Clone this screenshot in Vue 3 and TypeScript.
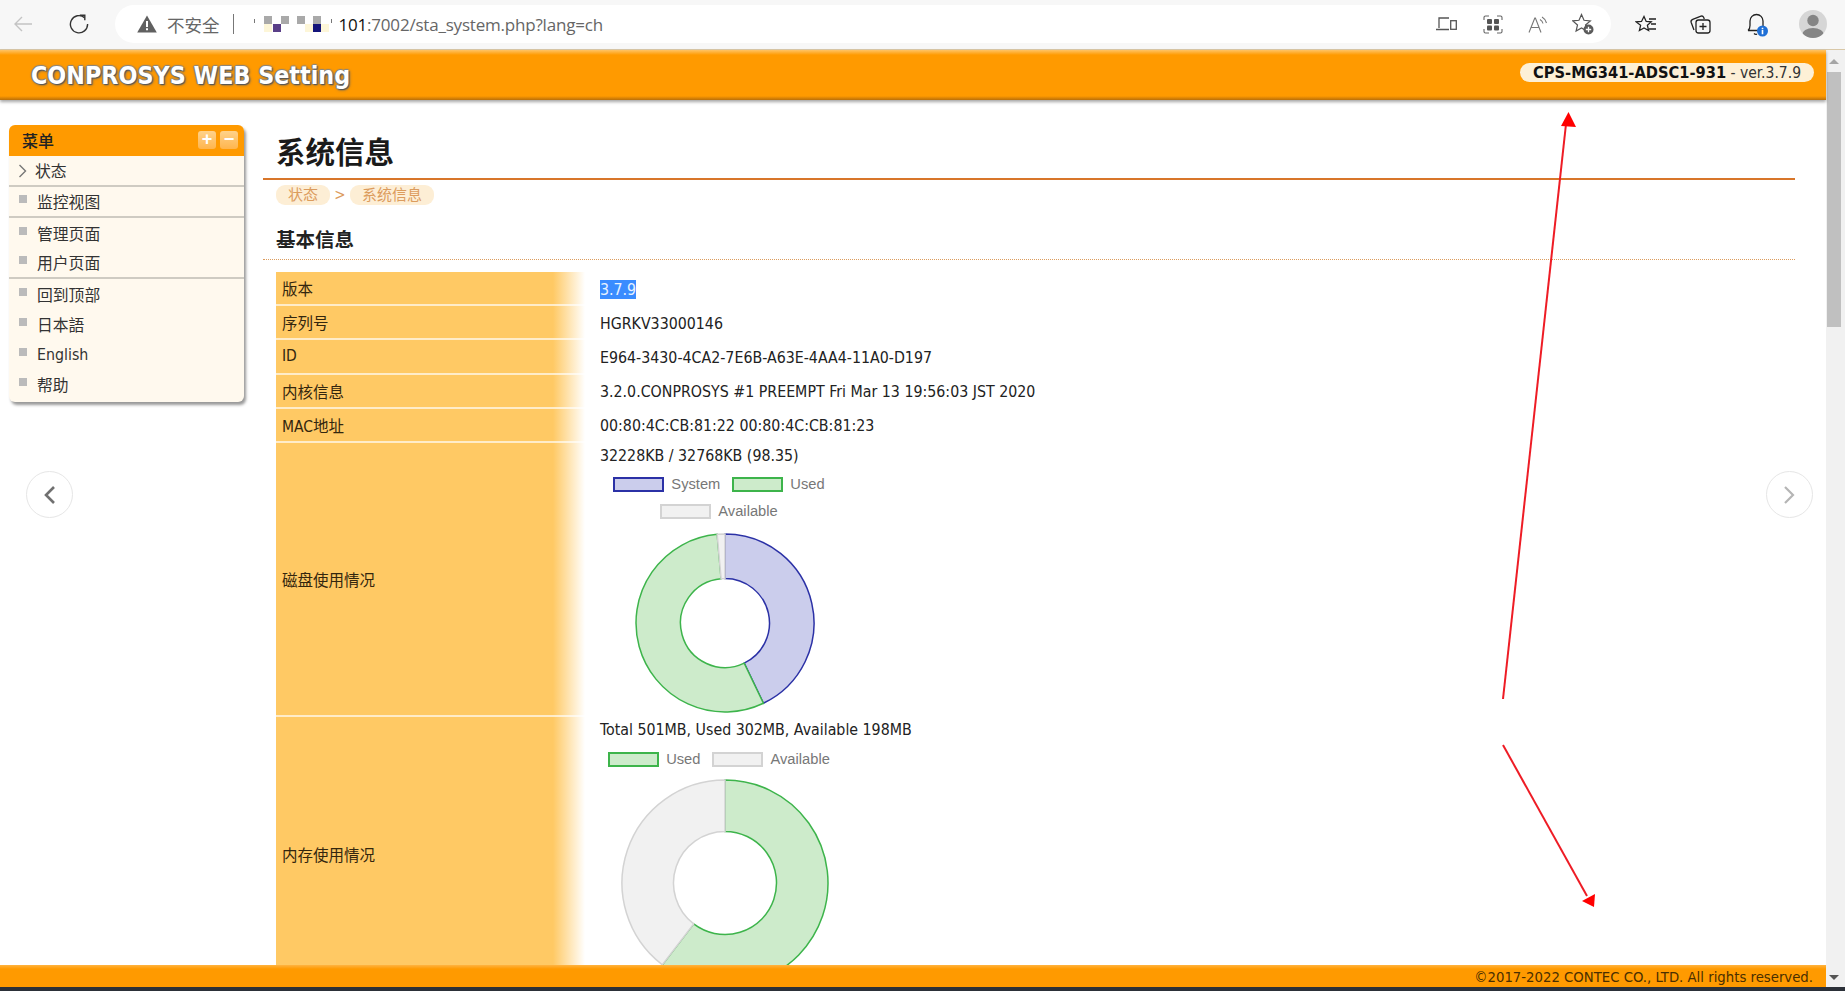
<script setup lang="ts">
interface Slice {
  value: number;
  fill: string;
  stroke: string;
}

interface Donut {
  size: number;
  outer: number;
  inner: number;
  slices: Slice[];
}

const systemColor = { fill: "#cbcdec", stroke: "#2b31a6" };
const usedColor = { fill: "#cdebcb", stroke: "#3db44b" };
const freeColor = { fill: "#f1f1f1", stroke: "#d3d3d3" };

const menuItems = [
  { label: "状态", kind: "chevron", line: true },
  { label: "监控视图", kind: "dot", line: true },
  { label: "管理页面", kind: "dot", line: false },
  { label: "用户页面", kind: "dot", line: true },
  { label: "回到顶部", kind: "dot", line: false },
  { label: "日本語", kind: "dot", line: false },
  { label: "English", kind: "dot", line: false },
  { label: "帮助", kind: "dot", line: false },
];

const infoRows = [
  { label: "序列号", value: "HGRKV33000146" },
  { label: "ID", value: "E964-3430-4CA2-7E6B-A63E-4AA4-11A0-D197" },
  { label: "内核信息", value: "3.2.0.CONPROSYS #1 PREEMPT Fri Mar 13 19:56:03 JST 2020" },
  { label: "MAC地址", value: "00:80:4C:CB:81:22 00:80:4C:CB:81:23" },
];

const diskChart: Donut = {
  size: 182,
  outer: 89,
  inner: 44.5,
  slices: [
    { value: 42.9, ...systemColor },
    { value: 55.7, ...usedColor },
    { value: 1.4, ...freeColor },
  ],
};

const memoryChart: Donut = {
  size: 210,
  outer: 103,
  inner: 51.5,
  slices: [
    { value: 302, ...usedColor },
    { value: 198, ...freeColor },
  ],
};

const point = (c: number, r: number, deg: number) => {
  const a = ((deg - 90) * Math.PI) / 180;
  return `${(c + r * Math.cos(a)).toFixed(2)} ${(c + r * Math.sin(a)).toFixed(2)}`;
};

const slicePaths = (chart: Donut) => {
  const total = chart.slices.reduce((sum, s) => sum + s.value, 0);
  const c = chart.size / 2;
  let start = 0;
  return chart.slices.map((s) => {
    const end = start + (s.value / total) * 360;
    const large = end - start > 180 ? 1 : 0;
    const d =
      `M ${point(c, chart.outer, start)} A ${chart.outer} ${chart.outer} 0 ${large} 1 ${point(c, chart.outer, end)} ` +
      `L ${point(c, chart.inner, end)} A ${chart.inner} ${chart.inner} 0 ${large} 0 ${point(c, chart.inner, start)} Z`;
    start = end;
    return { d, fill: s.fill, stroke: s.stroke };
  });
};

const diskPaths = slicePaths(diskChart);
const memoryPaths = slicePaths(memoryChart);
</script>

<template>
  <div class="browser">
    <div class="chrome">
      <svg class="ic-back" width="20" height="18" viewBox="0 0 20 18" fill="none" stroke="#c4c4c4" stroke-width="1.4">
        <path d="M19 9H2M9 2 2 9l7 7" />
      </svg>
      <svg class="ic-reload" width="20" height="20" viewBox="0 0 20 20" fill="none" stroke="#333" stroke-width="1.4">
        <path d="M15.5 3.6A8.6 8.6 0 1 0 18.6 10" />
        <path d="M10.8 1.2h5v5" />
      </svg>
      <div class="address">
        <svg class="ic-warn" width="20" height="18" viewBox="0 0 20 18">
          <path d="M10 .5 19.8 17.5H.2Z" fill="#606060" />
          <path d="M9 6h2v6H9zM9 13.2h2v2H9z" fill="#fff" />
        </svg>
        <span class="insecure">不安全</span>
        <span class="divider"></span>
        <span class="redacted">
          <i class="tick" style="left: 20px"></i>
          <i class="px gray" style="left: 30px; top: 0"></i>
          <i class="px cream" style="left: 30px; top: 8px"></i>
          <i class="px purple" style="left: 39px; top: 8px"></i>
          <i class="px gray" style="left: 47px; top: 0"></i>
          <i class="px gray" style="left: 63px; top: 0"></i>
          <i class="px cream" style="left: 71px; top: 8px"></i>
          <i class="px gray" style="left: 79px; top: 0"></i>
          <i class="px navy" style="left: 79px; top: 8px"></i>
          <i class="px cream" style="left: 87px; top: 8px"></i>
          <i class="tick" style="left: 97px"></i>
        </span>
        <span class="url"><b>101</b>:7002/sta_system.php?lang=ch</span>
        <span class="spacer"></span>
        <svg class="ic-device" width="21" height="14" viewBox="0 0 21 14" fill="none" stroke="#555" stroke-width="1.3">
          <path d="M13 1H3v10M0 12.5h13" />
          <rect x="14.7" y="3.7" width="5.6" height="8.6" />
        </svg>
        <svg class="ic-apps" width="20" height="19" viewBox="0 0 20 19">
          <g fill="#555">
            <rect x="4" y="4" width="5" height="5" rx="1" />
            <rect x="11" y="4" width="5" height="5" rx="1" />
            <rect x="4" y="10.5" width="5" height="5" rx="1" />
            <rect x="11" y="10.5" width="5" height="5" rx="1" />
          </g>
          <path d="M1 5V2.5A1.5 1.5 0 0 1 2.500 1H6M14 1h3.500A1.500 1.500 0 0 1 19 2.500V5M1 14v2.500A1.500 1.500 0 0 0 2.500 18H6M14 18h3.500a1.500 1.500 0 0 0 1.500-1.500V14" fill="none" stroke="#666" stroke-width="1.1" />
        </svg>
        <svg class="ic-read" width="20" height="17" viewBox="0 0 20 17" fill="none" stroke="#777" stroke-width="1.1">
          <path d="M1 16.500 6.800 2h.6L13 16.500M3 11.500h8" />
          <path d="M12 3.500q2.500 1.500 3 4M14 1q3.500 2 4.500 6" />
        </svg>
        <svg class="ic-fav-add" width="22" height="22" viewBox="0 0 22 22">
          <path d="M9.500 1.500 12 7.300l6.300.6-4.800 4.100 1.400 6.100-5.400-3.200-5.400 3.200L5.500 12 .8 7.900l6.200-.6Z" fill="none" stroke="#555" stroke-width="1.2" />
          <circle cx="16.500" cy="16.500" r="5" fill="#5a5a5a" />
          <path d="M16.500 13.800v5.400M13.800 16.500h5.400" stroke="#fff" stroke-width="1.300" />
        </svg>
      </div>
      <svg class="ic-favs" width="22" height="19" viewBox="0 0 22 19" fill="none" stroke="#222" stroke-width="1.3">
        <path d="M9 1.500 11.200 6.500l5 .4-3.800 3.400 1.200 5.200L9 12.900l-4.600 2.600 1.200-5.200L1.200 6.900l5.300-.4Z" />
        <path d="M14 4h7M16 9h5M14 14h7" />
      </svg>
      <svg class="ic-collect" width="23" height="20" viewBox="0 0 23 20" fill="none" stroke="#222" stroke-width="1.3">
        <path d="M5 16 2.200 8.500q-.8-2.300 1.500-3.200L12 2.200q1.800-.6 2.600 1L15.300 5" />
        <rect x="7" y="6" width="14" height="13" rx="2.500" />
        <path d="M14 9v7M10.500 12.500h7" />
      </svg>
      <svg class="ic-bell" width="23" height="25" viewBox="0 0 23 25">
        <path d="M3 18.500q2-1.500 2-5V9a6.500 6.500 0 0 1 13 0v4.500q0 2 1 3M3 18.500h12M9 21.500q1.500 1.500 3 .5" fill="none" stroke="#222" stroke-width="1.3" />
        <circle cx="17.500" cy="19" r="5.500" fill="#1f6fd6" />
        <path d="M16.700 18h1.600v4.200h-1.600zM16.700 15.800h1.600v1.400h-1.600z" fill="#fff" />
      </svg>
      <svg class="ic-avatar" width="28" height="28" viewBox="0 0 28 28">
        <defs>
          <clipPath id="avatar-clip"><circle cx="14" cy="14" r="14" /></clipPath>
        </defs>
        <circle cx="14" cy="14" r="14" fill="#d6d6d6" />
        <g clip-path="url(#avatar-clip)" fill="#858585">
          <circle cx="14" cy="10.500" r="5.700" />
          <ellipse cx="14" cy="25" rx="11" ry="7" />
        </g>
      </svg>
    </div>

    <div class="viewport">
      <div class="page">
        <header class="top-bar">
          <div class="brand">CONPROSYS WEB Setting</div>
          <div class="device-pill"><b>CPS-MG341-ADSC1-931</b> - ver.3.7.9</div>
        </header>

        <div class="body">
          <aside class="menu">
            <div class="menu-head">
              <span>菜单</span>
              <span class="menu-tools">
                <i class="tool">+</i>
                <i class="tool">−</i>
              </span>
            </div>
            <div v-for="item in menuItems" :key="item.label" class="menu-item" :class="{ line: item.line }">
              <svg v-if="item.kind === 'chevron'" class="chev" width="9" height="14" viewBox="0 0 9 14" fill="none" stroke="#777" stroke-width="1.4">
                <path d="M1.500 1 7.500 7l-6 6" />
              </svg>
              <i v-else class="dot"></i>
              <span>{{ item.label }}</span>
            </div>
          </aside>

          <main class="content">
            <h1>系统信息</h1>
            <div class="crumbs">
              <span class="crumb">状态</span>
              <span class="crumb-sep">&gt;</span>
              <span class="crumb long">系统信息</span>
            </div>
            <h2>基本信息</h2>

            <div class="info">
              <div class="row">
                <div class="label">版本</div>
                <div class="value"><span class="selected">3.7.9</span></div>
              </div>
              <div v-for="row in infoRows" :key="row.label" class="row">
                <div class="label">{{ row.label }}</div>
                <div class="value">{{ row.value }}</div>
              </div>
              <div class="row chart-row disk">
                <div class="label">磁盘使用情况</div>
                <div class="value">
                  <div class="usage">32228KB / 32768KB (98.35)</div>
                  <div class="chart">
                    <div class="legend disk-legend">
                      <span class="key"><i class="swatch system"></i>System</span>
                      <span class="key"><i class="swatch used"></i>Used</span>
                      <span class="key"><i class="swatch free"></i>Available</span>
                    </div>
                    <svg class="donut disk-donut" :width="diskChart.size" :height="diskChart.size">
                      <path v-for="p in diskPaths" :key="p.d" :d="p.d" :fill="p.fill" :stroke="p.stroke" stroke-width="1.500" />
                    </svg>
                  </div>
                </div>
              </div>
              <div class="row chart-row memory">
                <div class="label">内存使用情况</div>
                <div class="value">
                  <div class="usage">Total 501MB, Used 302MB, Available 198MB</div>
                  <div class="chart">
                    <div class="legend mem-legend">
                      <span class="key"><i class="swatch used"></i>Used</span>
                      <span class="key"><i class="swatch free"></i>Available</span>
                    </div>
                    <svg class="donut mem-donut" :width="memoryChart.size" :height="memoryChart.size">
                      <path v-for="p in memoryPaths" :key="p.d" :d="p.d" :fill="p.fill" :stroke="p.stroke" stroke-width="1.500" />
                    </svg>
                  </div>
                </div>
              </div>
            </div>
          </main>
        </div>

        <footer class="bottom-bar">©2017-2022 CONTEC CO., LTD. All rights reserved.</footer>
      </div>

      <div class="scrollbar">
        <i class="arrow-up"></i>
        <i class="thumb"></i>
        <span class="spacer"></span>
        <i class="arrow-down"></i>
      </div>
    </div>

    <div class="taskbar"></div>

    <button class="nav nav-prev" aria-label="previous">
      <svg width="13" height="20" viewBox="0 0 13 20" fill="none" stroke="#707070" stroke-width="2.600"><path d="M11 2 3 10l8 8" /></svg>
    </button>
    <button class="nav nav-next" aria-label="next">
      <svg width="13" height="20" viewBox="0 0 13 20" fill="none" stroke="#b5b5b5" stroke-width="2.200"><path d="M2 2l8 8-8 8" /></svg>
    </button>

    <!-- red annotation arrows drawn over the screenshot -->
    <svg class="marks" width="1845" height="991" viewBox="0 0 1845 991">
      <path d="M1503 699 1566 124" stroke="#ee1c25" stroke-width="2" />
      <path d="M1568.500 112 1561 126 1576 127Z" fill="#ff0000" />
      <path d="M1503 745 1587 896" stroke="#ee1c25" stroke-width="2" />
      <path d="M1594 907 1595 894 1582 901Z" fill="#ff0000" />
    </svg>
  </div>
</template>

<style scoped>
.browser {
  position: relative;
  display: flex;
  flex-direction: column;
  height: 991px;
  overflow: hidden;
  background: #fff;
  font-family: "DejaVu Sans Condensed", "Noto Sans CJK SC", sans-serif;
  color: #222;
}

.chrome {
  flex: none;
  display: flex;
  align-items: center;
  height: 50px;
  padding-bottom: 1px;
  background: #f7f7f7;
  border-bottom: 1px solid #d9c8a8;
  box-sizing: border-box;
}
.ic-back { margin-left: 13px; }
.ic-reload { margin-left: 36px; }

.address {
  display: flex;
  align-items: center;
  box-sizing: border-box;
  width: 1496px;
  height: 38px;
  margin-left: 26px;
  padding-left: 22px;
  background: #fff;
  border-radius: 19px;
  font-family: "Open Sans", "Noto Sans CJK SC", sans-serif;
}
.insecure {
  margin-left: 10px;
  font-size: 17.500px;
  color: #666;
  font-family: "Noto Sans CJK SC", sans-serif;
}
.divider {
  width: 1px;
  height: 20px;
  margin-left: 13px;
  background: #777;
}
.redacted {
  position: relative;
  width: 105px;
  height: 17px;
  flex: none;
}
.px {
  position: absolute;
  width: 8px;
  height: 8px;
}
.tick {
  position: absolute;
  top: 3px;
  width: 1px;
  height: 4px;
  background: #777;
}
.gray { background: #a9a9a9; }
.cream { background: #fdf6d8; }
.purple { background: #5a3f88; }
.navy { background: #14147a; }
.url {
  font-size: 17px;
  letter-spacing: -0.200px;
  color: #666;
}
.url b {
  font-weight: 400;
  color: #111;
}
.spacer { flex: 1; }
.ic-device { margin-right: 26px; }
.ic-apps { margin-right: 25px; }
.ic-read { margin-right: 24px; }
.ic-fav-add { margin-right: 17px; }
.ic-favs { margin-left: 24px; }
.ic-collect { margin-left: 32px; }
.ic-bell { margin-left: 33px; }
.ic-avatar { margin-left: 31px; }

.viewport {
  flex: 1;
  display: flex;
  min-height: 0;
}
.page {
  flex: 1;
  display: flex;
  flex-direction: column;
  min-width: 0;
}

.top-bar {
  flex: none;
  position: relative;
  z-index: 2;
  display: flex;
  align-items: center;
  justify-content: space-between;
  box-sizing: border-box;
  height: 50px;
  padding: 0 12px 0 31px;
  background: linear-gradient(#ffc466 0, #ff9a00 5px, #ff9a00 46px, #b96f0a 50px);
  box-shadow: 0 2px 3px rgba(0, 0, 0, 0.35);
}
.brand {
  font-size: 24.800px;
  font-weight: 700;
  color: #fff;
  text-shadow: 1px 1px 1px #555, -1px 0 1px #777, 0 -1px 1px #888, 1px 1px 3px #666;
}
.device-pill {
  margin-top: -5px;
  padding: 0 13px;
  height: 19px;
  line-height: 19px;
  border-radius: 10px;
  background: #fdf0d6;
  font-size: 15.500px;
  color: #333;
}
.device-pill b {
  font-size: 16.300px;
  color: #111;
}

.body {
  flex: 1;
  display: flex;
  align-items: flex-start;
  min-height: 0;
  overflow: hidden;
  padding-left: 9px;
}

.menu {
  flex: none;
  width: 235px;
  margin-top: 25px;
  border-radius: 6px;
  background: #fff9ee;
  box-shadow: 2px 3px 3px #999;
  padding-bottom: 3px;
}
.menu-head {
  display: flex;
  align-items: center;
  justify-content: space-between;
  box-sizing: border-box;
  height: 31px;
  padding: 0 6px 2px 13px;
  background: #ff9a00;
  border-radius: 6px 6px 0 0;
  font-size: 16px;
  font-weight: 500;
  color: #222;
}
.menu-tools {
  display: flex;
  gap: 4px;
}
.tool {
  width: 18px;
  height: 18px;
  line-height: 17px;
  border-radius: 3px;
  text-align: center;
  font: 700 18px/17px "Liberation Sans", sans-serif;
  color: #fff;
  background: linear-gradient(#ffd28a, #ffb54d);
}
.menu-item {
  display: flex;
  align-items: center;
  box-sizing: border-box;
  height: 30px;
  font-size: 15.800px;
  color: #333;
}
.menu-item.line {
  height: 31px;
  border-bottom: 2px solid #cfcbc2;
}
.chev {
  margin-left: 9px;
  margin-right: 8px;
}
.dot {
  flex: none;
  width: 8px;
  height: 8px;
  margin-left: 10px;
  margin-right: 10px;
  margin-top: -5px;
  background: #bbb;
}

.content {
  flex: 1;
  min-width: 0;
  margin: 0 31px 0 19px;
}
h1 {
  margin: 0;
  height: 80px;
  box-sizing: border-box;
  padding: 33px 0 0 13px;
  font-size: 29.500px;
  line-height: 40px;
  font-weight: 700;
  color: #1a1a1a;
  border-bottom: 2px solid #d8762a;
}
.crumbs {
  display: flex;
  align-items: center;
  height: 20px;
  margin-top: 5px;
  padding-left: 13px;
  font-size: 15px;
  color: #dc9c5d;
}
.crumb {
  padding: 0 12px;
  height: 20px;
  line-height: 20px;
  border-radius: 9px;
  background: #fdeed5;
}
.crumb-sep {
  width: 20px;
  text-align: center;
}
h2 {
  margin: 25px 0 0;
  padding: 0 0 7px 13px;
  font-size: 19.500px;
  line-height: 22px;
  font-weight: 700;
  color: #222;
  border-bottom: 1px dotted #dc9c5d;
}

.info {
  margin: 12px 0 0 13px;
}
.row {
  display: flex;
  box-sizing: border-box;
  min-height: 34.200px;
  position: relative;
}
.label {
  flex: none;
  display: flex;
  align-items: center;
  box-sizing: border-box;
  width: 309px;
  padding-left: 6px;
  font-size: 15.500px;
  color: #33260e;
  background: linear-gradient(to right, #ffc964 277px, #fff 309px);
  border-bottom: 2px solid rgba(255, 255, 255, 0.65);
}
.value {
  flex: 1;
  display: flex;
  align-items: center;
  min-width: 0;
  padding-left: 15px;
  font-size: 15.800px;
  color: #222;
}
.selected {
  background: #3a8cff;
  color: #e8f2ff;
}

.chart-row .value {
  display: block;
}
.chart-row.disk { height: 274px; }
.chart-row.memory { height: 276px; }
.usage {
  height: 26px;
  line-height: 26px;
}
.chart {
  display: flex;
  flex-direction: column;
  align-items: center;
  width: 250px;
}
.legend {
  display: flex;
  flex-wrap: wrap;
  justify-content: center;
  column-gap: 12px;
  row-gap: 12px;
  margin-right: 12px;
  font: 14.700px/15px "Liberation Sans", sans-serif;
  color: #777;
}
.disk-legend { margin-top: 8px; }
.mem-legend { margin-top: 9px; }
.key {
  display: flex;
  align-items: center;
  gap: 7px;
}
.swatch {
  width: 51px;
  height: 15px;
  box-sizing: border-box;
  border: 2px solid;
}
.system { background: #cbcdec; border-color: #2b31a6; }
.used { background: #cdebcb; border-color: #3db44b; }
.free { background: #f1f1f1; border-color: #d3d3d3; }
.donut { flex: none; }
.disk-donut { margin-top: 13px; }
.mem-donut { margin-top: 11px; }

.bottom-bar {
  flex: none;
  box-sizing: border-box;
  height: 22px;
  padding: 1px 13px 0 0;
  text-align: right;
  font-size: 14.750px;
  line-height: 22px;
  color: #4a2f00;
  background: linear-gradient(#ffb340 0, #ff9a00 4px);
  position: relative;
  z-index: 2;
}

.scrollbar {
  flex: none;
  display: flex;
  flex-direction: column;
  align-items: flex-start;
  width: 19px;
  background: #f1f1f1;
}
.arrow-up {
  width: 0;
  height: 0;
  margin: 9px 0 0 3px;
  border-left: 5px solid transparent;
  border-right: 5px solid transparent;
  border-bottom: 5px solid #a5a5a5;
}
.thumb {
  width: 14px;
  height: 255px;
  margin: 8px 0 0 1px;
  background: #c0c0c0;
}
.arrow-down {
  width: 0;
  height: 0;
  margin: 0 0 7px 3px;
  border-left: 5px solid transparent;
  border-right: 5px solid transparent;
  border-top: 5px solid #555;
}

.taskbar {
  flex: none;
  height: 4px;
  background: #2b3038;
}

.nav {
  position: absolute;
  top: 471px;
  display: flex;
  align-items: center;
  justify-content: center;
  width: 47px;
  height: 47px;
  padding: 0;
  border: 1px solid #e6e6e6;
  border-radius: 50%;
  background: #fff;
}
.nav-prev { left: 26px; }
.nav-next { left: 1766px; }

.marks {
  position: absolute;
  left: 0;
  top: 0;
  pointer-events: none;
}
</style>

<style>
html,
body {
  margin: 0;
  overflow: hidden;
}
</style>
